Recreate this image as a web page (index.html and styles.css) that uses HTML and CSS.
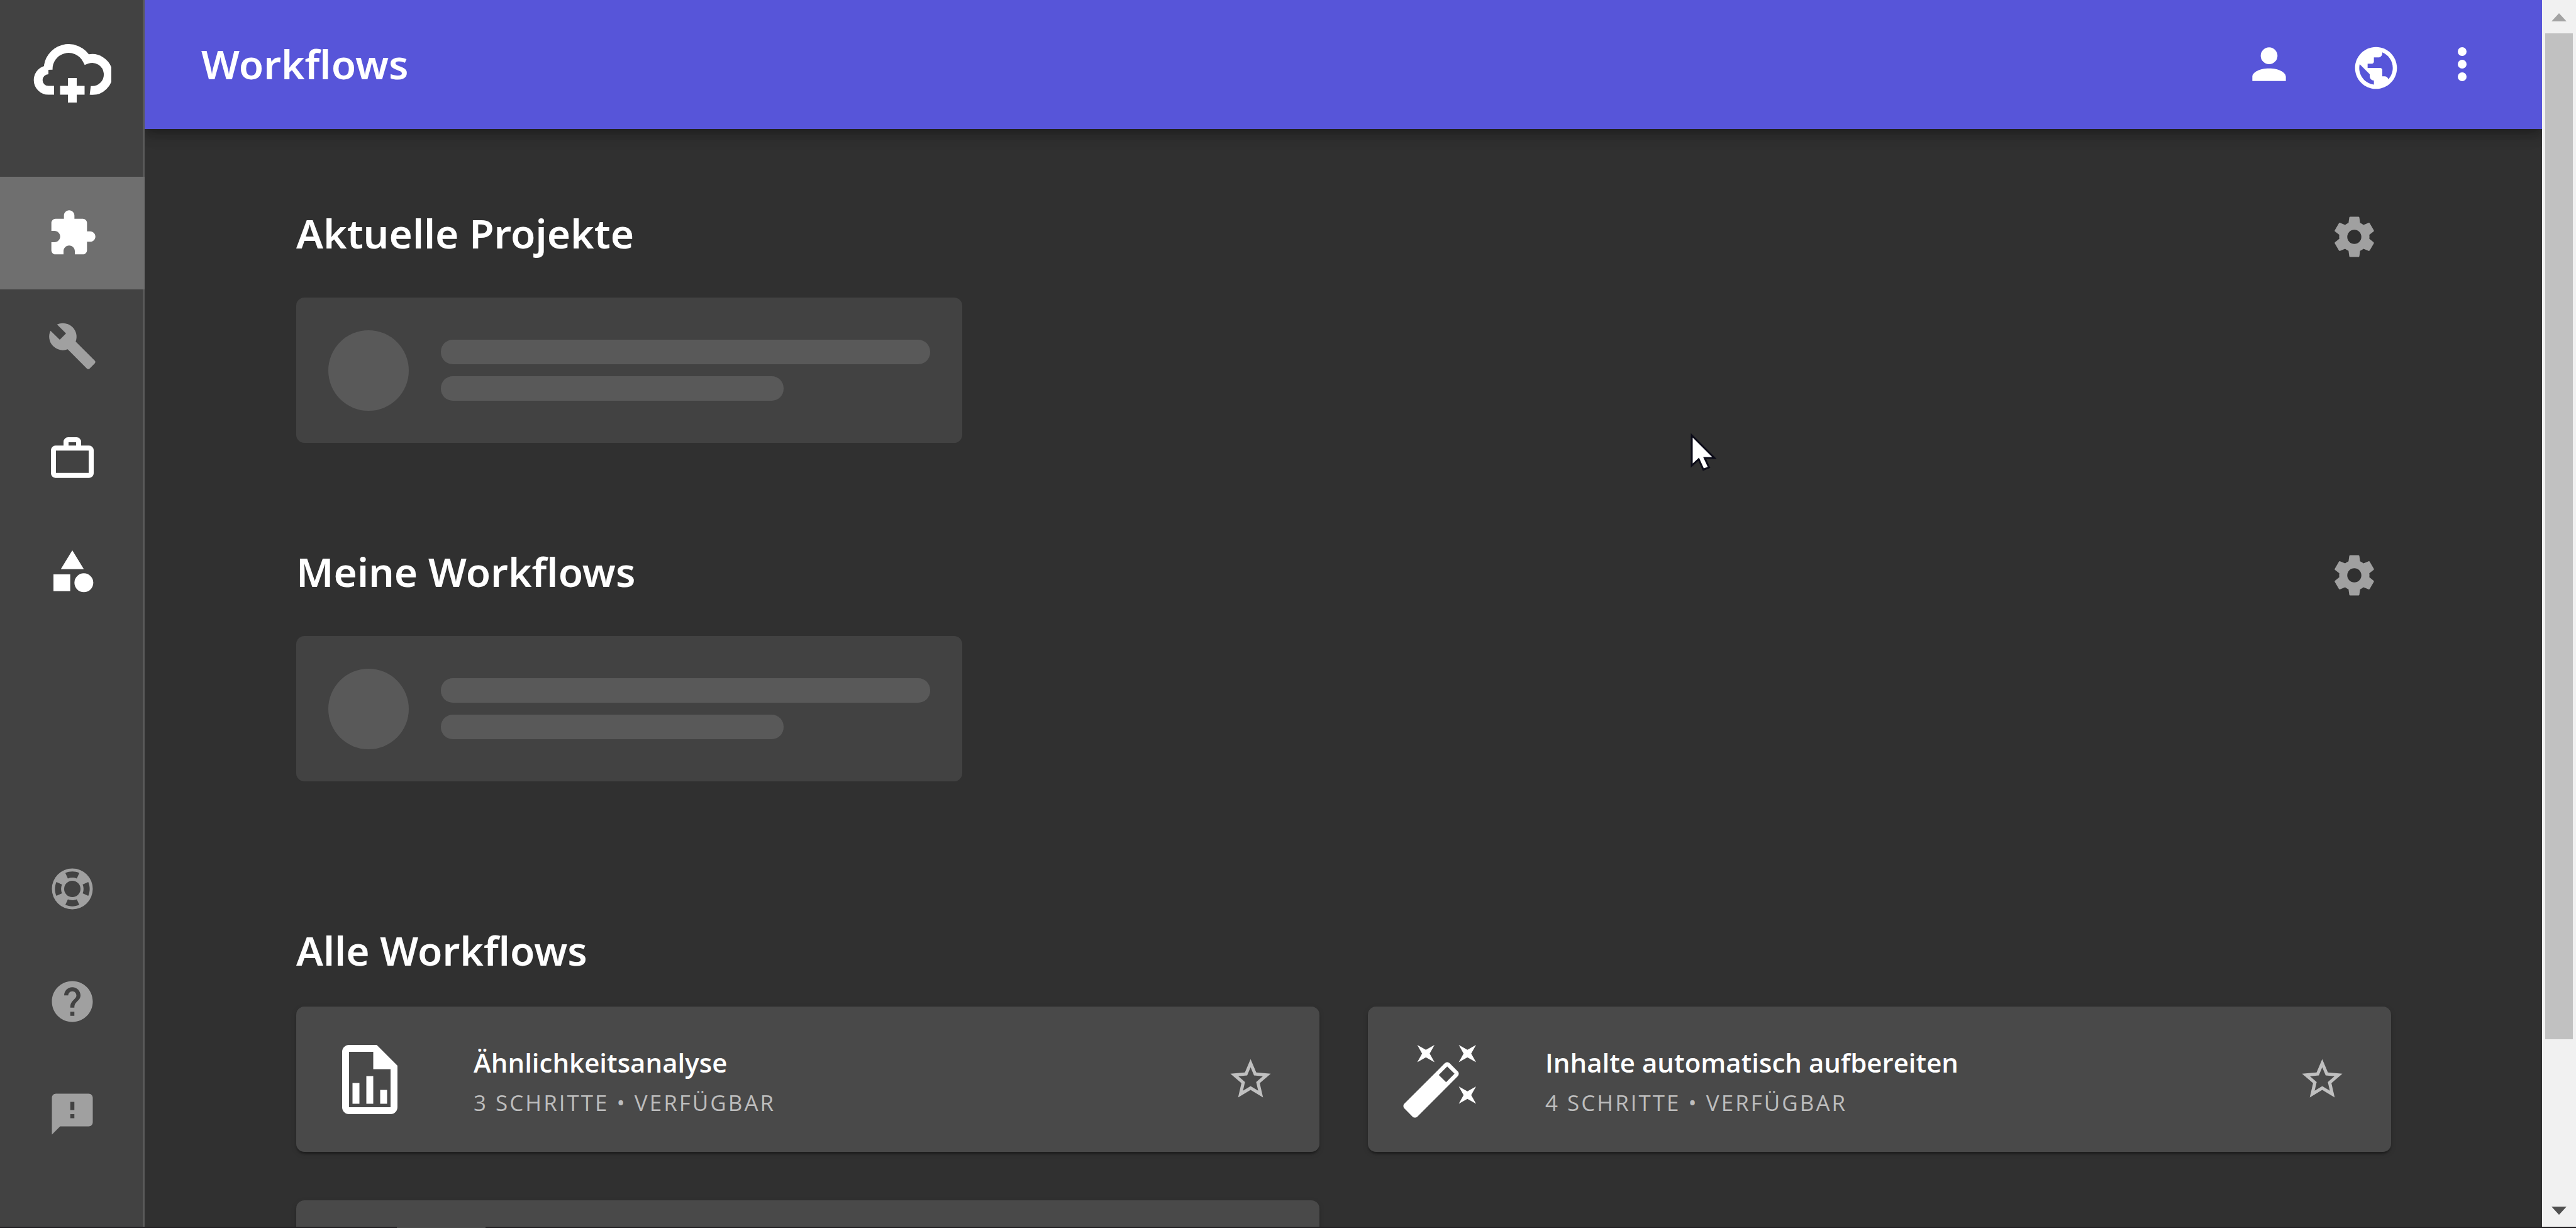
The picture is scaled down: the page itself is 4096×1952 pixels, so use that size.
FILE: index.html
```html
<!DOCTYPE html>
<html lang="de">
<head>
  <meta charset="UTF-8" />
  <title>Workflows</title>
  <link rel="stylesheet" href="styles.css">
</head>
<body>

  <div class="app">
    <aside class="sidebar">
      <a class="logo" href="#" aria-label="Start">
        <svg viewBox="53 69 124 94">
          <path d="M86 142.6H77A16.3 16.3 0 0 1 77 110H76.6A32.6 32.6 0 0 1 138 93.5A25.4 25.4 0 1 1 143.5 142.6" fill="none" stroke="#fff" stroke-width="14"/>
          <path d="M108 123h14v12.5h12.5v14H122V162h-14v-12.5H95.5v-14H108z" fill="#fff"/>
        </svg>
      </a>

      <nav class="nav">
        <a class="nav-item active" href="#" aria-label="Workflows">
          <svg viewBox="0 0 24 24"><path d="M20.5 11H19V7c0-1.1-.9-2-2-2h-4V3.5C13 2.12 11.88 1 10.5 1S8 2.12 8 3.5V5H4c-1.1 0-1.99.9-1.99 2v3.8H3.5c1.49 0 2.7 1.21 2.7 2.7s-1.21 2.7-2.7 2.7H2V20c0 1.1.9 2 2 2h3.8v-1.5c0-1.49 1.21-2.7 2.7-2.7 1.49 0 2.7 1.21 2.7 2.7V22H17c1.1 0 2-.9 2-2v-4h1.5c1.38 0 2.5-1.12 2.5-2.5S21.88 11 20.5 11z"/></svg>
        </a>
        <a class="nav-item muted" href="#" aria-label="Werkzeuge">
          <svg viewBox="0 0 24 24"><path d="M22.7 19l-9.1-9.1c.9-2.3.4-5-1.5-6.9-2-2-5-2.4-7.4-1.3L9 6 6 9 1.6 4.7C.4 7.1.9 10.1 2.9 12.1c1.9 1.9 4.6 2.4 6.9 1.5l9.1 9.1c.4.4 1 .4 1.4 0l2.3-2.3c.5-.4.5-1.1.1-1.4z"/></svg>
        </a>
        <a class="nav-item" href="#" aria-label="Projekte">
          <svg viewBox="0 0 24 24"><path stroke="#fff" stroke-width=".4" d="M14 6V4h-4v2h4zM4 8v11h16V8H4zm16-2c1.11 0 2 .89 2 2v11c0 1.11-.89 2-2 2H4c-1.11 0-2-.89-2-2l.01-11c0-1.11.88-2 1.99-2h4V4c0-1.11.89-2 2-2h4c1.11 0 2 .89 2 2v2h4z"/></svg>
        </a>
        <a class="nav-item" href="#" aria-label="Kategorien">
          <svg viewBox="0 0 24 24"><path d="M12 2l-5.500 9h11z"/><circle cx="17.500" cy="17.500" r="4.500"/><path d="M3 13.500h8v8H3z"/></svg>
        </a>
      </nav>

      <nav class="nav nav-bottom">
        <a class="nav-item muted" href="#" aria-label="Support">
          <svg viewBox="0 0 24 24"><path fill-rule="evenodd" d="M19.79,15.41C20.74,13.24 20.74,10.75 19.79,8.59L17.05,9.83C17.65,11.21 17.65,12.78 17.06,14.17L19.79,15.41M15.42,4.21C13.25,3.26 10.76,3.26 8.59,4.21L9.83,6.94C11.22,6.35 12.79,6.35 14.18,6.95L15.42,4.21M4.21,8.58C3.26,10.76 3.26,13.24 4.21,15.42L6.95,14.17C6.35,12.79 6.35,11.21 6.95,9.82L4.21,8.58M8.59,19.79C10.76,20.74 13.25,20.74 15.42,19.78L14.18,17.05C12.8,17.65 11.22,17.65 9.84,17.06L8.59,19.79M12,2A10,10 0 0,1 22,12A10,10 0 0,1 12,22A10,10 0 0,1 2,12A10,10 0 0,1 12,2M12,8A4,4 0 0,0 8,12A4,4 0 0,0 12,16A4,4 0 0,0 16,12A4,4 0 0,0 12,8Z"/></svg>
        </a>
        <a class="nav-item muted" href="#" aria-label="Hilfe">
          <svg viewBox="0 0 24 24"><path d="M12 2C6.48 2 2 6.48 2 12s4.48 10 10 10 10-4.48 10-10S17.52 2 12 2zm1 17h-2v-2h2v2zm2.07-7.75l-.9.92C13.45 12.9 13 13.5 13 15h-2v-.5c0-1.1.45-2.1 1.17-2.83l1.24-1.26c.37-.36.59-.86.59-1.41 0-1.1-.9-2-2-2s-2 .9-2 2H8c0-2.21 1.79-4 4-4s4 1.79 4 4c0 .88-.36 1.68-.93 2.25z"/></svg>
        </a>
        <a class="nav-item muted" href="#" aria-label="Feedback">
          <svg viewBox="0 0 24 24"><path d="M20 2H4c-1.1 0-1.99.9-1.99 2L2 22l4-4h14c1.1 0 2-.9 2-2V4c0-1.1-.9-2-2-2zm-7 12h-2v-2h2v2zm0-4h-2V6h2v4z"/></svg>
        </a>
      </nav>
    </aside>

    <div class="page">
      <header class="topbar">
        <h1>Workflows</h1>
        <div class="actions">
          <button class="account" aria-label="Konto">
            <svg viewBox="0 0 24 24"><path d="M12,4A4,4 0 0,1 16,8A4,4 0 0,1 12,12A4,4 0 0,1 8,8A4,4 0 0,1 12,4M12,14C16.42,14 20,15.79 20,18V20H4V18C4,15.79 7.58,14 12,14Z"/></svg>
          </button>
          <button class="language" aria-label="Sprache">
            <svg viewBox="0 0 24 24"><path d="M12 2C6.48 2 2 6.48 2 12s4.48 10 10 10 10-4.48 10-10S17.52 2 12 2zm-1 17.93c-3.95-.49-7-3.85-7-7.93 0-.62.08-1.21.21-1.79L9 15v1c0 1.1.9 2 2 2v1.93zm6.9-2.54c-.26-.81-1-1.39-1.9-1.39h-1v-3c0-.55-.45-1-1-1H8v-2h2c.55 0 1-.45 1-1V7h2c1.1 0 2-.9 2-2v-.41c2.93 1.19 5 4.06 5 7.41 0 2.08-.8 3.97-2.1 5.39z"/></svg>
          </button>
          <button aria-label="Mehr">
            <svg viewBox="0 0 24 24"><circle cx="12" cy="6" r="2.1"/><circle cx="12" cy="12" r="2.1"/><circle cx="12" cy="18" r="2.1"/></svg>
          </button>
        </div>
      </header>

      <main class="content">
        <section>
          <div class="section-head">
            <h2>Aktuelle Projekte</h2>
            <button class="settings" aria-label="Einstellungen">
              <svg viewBox="0 0 24 24"><path id="cog" d="M12,15.5A3.5,3.5 0 0,1 8.5,12A3.5,3.5 0 0,1 12,8.5A3.5,3.5 0 0,1 15.5,12A3.5,3.5 0 0,1 12,15.5M19.43,12.97C19.47,12.65 19.5,12.33 19.5,12C19.5,11.67 19.47,11.34 19.43,11L21.54,9.37C21.73,9.22 21.78,8.95 21.66,8.73L19.66,5.27C19.54,5.05 19.27,4.96 19.05,5.05L16.56,6.05C16.04,5.66 15.5,5.32 14.87,5.07L14.5,2.42C14.46,2.18 14.25,2 14,2H10C9.75,2 9.54,2.18 9.5,2.42L9.13,5.07C8.5,5.32 7.96,5.66 7.44,6.05L4.95,5.05C4.73,4.96 4.46,5.05 4.34,5.27L2.34,8.73C2.21,8.95 2.27,9.22 2.46,9.37L4.57,11C4.53,11.34 4.5,11.67 4.5,12C4.5,12.33 4.53,12.65 4.57,12.97L2.46,14.63C2.27,14.78 2.21,15.05 2.34,15.27L4.34,18.73C4.46,18.95 4.73,19.03 4.95,18.95L7.44,17.94C7.96,18.34 8.5,18.68 9.13,18.93L9.5,21.58C9.54,21.82 9.75,22 10,22H14C14.25,22 14.46,21.82 14.5,21.58L14.87,18.93C15.5,18.67 16.04,18.34 16.56,17.94L19.05,18.95C19.27,19.03 19.54,18.95 19.66,18.73L21.66,15.27C21.78,15.05 21.73,14.78 21.54,14.63L19.43,12.97Z"/></svg>
            </button>
          </div>
          <div class="grid-three">
            <div class="skeleton">
              <div class="skeleton-avatar"></div>
              <div class="skeleton-lines">
                <div class="skeleton-line"></div>
                <div class="skeleton-line short"></div>
              </div>
            </div>
          </div>
        </section>

        <section>
          <div class="section-head">
            <h2>Meine Workflows</h2>
            <button class="settings" aria-label="Einstellungen">
              <svg viewBox="0 0 24 24"><use href="#cog"/></svg>
            </button>
          </div>
          <div class="grid-three">
            <div class="skeleton">
              <div class="skeleton-avatar"></div>
              <div class="skeleton-lines">
                <div class="skeleton-line"></div>
                <div class="skeleton-line short"></div>
              </div>
            </div>
          </div>
        </section>

        <section class="all">
          <h2>Alle Workflows</h2>
          <div class="grid-two">
            <article class="card">
              <svg class="card-icon" viewBox="0 0 24 24"><path d="M14 2H6C4.89 2 4 2.9 4 4V20C4 21.11 4.89 22 6 22H18C19.11 22 20 21.11 20 20V8L14 2M18 20H6V4H13V9H18V20M9 13V19H7V13H9M15 15V19H17V15H15M11 11V19H13V11H11Z"/></svg>
              <div class="card-text">
                <h3>Ähnlichkeitsanalyse</h3>
                <p>3 Schritte • verfügbar</p>
              </div>
              <button class="star" aria-label="Favorit">
                <svg viewBox="0 0 24 24"><path id="star" d="M22 9.24l-7.19-.62L12 2 9.19 8.63 2 9.24l5.46 4.73L5.82 21 12 17.27 18.18 21l-1.63-7.03L22 9.24zM12 15.4l-3.76 2.27 1-4.28-3.32-2.88 4.38-.38L12 6.1l1.71 4.04 4.38.38-3.32 2.88 1 4.28L12 15.4z"/></svg>
              </button>
            </article>
            <article class="card">
              <svg class="card-icon" viewBox="0 0 24 24"><path d="M7.5,5.6L5,7L6.4,4.5L5,2L7.5,3.4L10,2L8.6,4.5L10,7L7.5,5.6M19.5,15.4L22,14L20.6,16.5L22,19L19.5,17.6L17,19L18.4,16.5L17,14L19.5,15.4M22,2L20.6,4.5L22,7L19.5,5.6L17,7L18.4,4.5L17,2L19.5,3.4L22,2M13.34,12.78L15.78,10.34L13.66,8.22L11.22,10.66L13.34,12.78M14.37,7.29L16.71,9.63C17.1,10 17.1,10.65 16.71,11.04L5.04,22.71C4.65,23.1 4,23.1 3.63,22.71L1.29,20.37C0.9,20 0.9,19.35 1.29,18.96L12.96,7.29C13.35,6.9 14,6.9 14.37,7.29Z"/></svg>
              <div class="card-text">
                <h3>Inhalte automatisch aufbereiten</h3>
                <p>4 Schritte • verfügbar</p>
              </div>
              <button class="star" aria-label="Favorit">
                <svg viewBox="0 0 24 24"><use href="#star"/></svg>
              </button>
            </article>
            <article class="card"></article>
          </div>
        </section>
      </main>
    </div>

    <div class="scrollbar">
      <svg class="arrow" viewBox="0 0 24 13"><path d="M12 0l12 13H0z" fill="#a3a3a3"/></svg>
      <div class="track">
        <div class="thumb"></div>
      </div>
      <svg class="arrow" viewBox="0 0 24 13"><path d="M0 0h24L12 13z" fill="#505050"/></svg>
    </div>
  </div>

  <div class="strip"><div class="strip-tab"></div></div>

  <svg class="cursor" viewBox="-2 -3 44 64">
    <path d="M1 2V50L12 40L19.500 56.500L28.500 53L21.500 38H37z" fill="#fff" stroke="#0b0b18" stroke-width="3"/>
  </svg>

</body>
</html>
```
FILE: styles.css
```css
* {
  box-sizing: border-box;
}

html, body {
  margin: 0;
  padding: 0;
  height: 100%;
}

body {
  display: flex;
  flex-direction: column;
  position: relative;
  overflow: hidden;
  background: #303030;
  color: #fff;
  font-family: "Open Sans", "Noto Sans", sans-serif;
}

h1, h2, h3, p {
  margin: 0;
}

h1, h2 {
  font-family: "Noto Sans", sans-serif;
  font-size: 64px;
  font-weight: 600;
  line-height: 90px;
}

button {
  display: flex;
  align-items: center;
  justify-content: center;
  padding: 0;
  border: none;
  background: none;
  color: inherit;
  cursor: pointer;
}

svg {
  display: block;
  fill: currentColor;
}

.app {
  display: flex;
  flex: 1;
  min-height: 0;
}

/* Sidebar */
.sidebar {
  display: flex;
  flex-direction: column;
  flex-shrink: 0;
  width: 230px;
  padding-bottom: 90px;
  background: #424242;
  box-shadow: inset -3px 0 #595959;
}

.logo {
  display: flex;
  justify-content: center;
  height: 281px;
  padding-top: 70px;
}

.logo svg {
  width: 124px;
  height: 94px;
}

.nav-item {
  display: flex;
  align-items: center;
  justify-content: center;
  height: 179px;
  color: #fff;
}

.nav-item svg {
  width: 80px;
  height: 80px;
}

.nav-item.active {
  background: #6f6f6f;
}

.nav-item.muted {
  color: #a0a0a0;
}

.nav-bottom {
  margin-top: auto;
}

.nav-bottom .nav-item svg {
  width: 78px;
  height: 78px;
}

/* Top bar */
.page {
  display: flex;
  flex-direction: column;
  flex: 1;
  min-width: 0;
  overflow: hidden;
}

.topbar {
  display: flex;
  align-items: center;
  justify-content: space-between;
  flex-shrink: 0;
  height: 205px;
  padding: 0 87px 2px 90px;
  background: #5755d9;
  box-shadow: 0 6px 13px -3px rgba(0,0,0,0.2), 0 13px 16px rgba(0,0,0,0.14), 0 3px 32px rgba(0,0,0,0.12);
}

.actions {
  display: flex;
  align-items: center;
  gap: 57px;
}

.actions svg {
  width: 80px;
  height: 80px;
}

.account {
  margin-right: 33px;
}

.language {
  padding-top: 12px;
}

/* Content */
.content {
  display: flex;
  flex-direction: column;
  gap: 152px;
  padding: 113px 240px 0 241px;
}

.section-head {
  display: flex;
  align-items: center;
  justify-content: space-between;
  height: 117px;
  margin-bottom: 38px;
}

.section-head h2 {
  padding-bottom: 12px;
}

.settings {
  width: 117px;
  height: 117px;
  color: #a0a0a0;
}

.settings svg {
  width: 77px;
  height: 77px;
}

.grid-three {
  display: grid;
  grid-template-columns: repeat(3, 1fr);
  gap: 77px;
}

.grid-two {
  display: grid;
  grid-template-columns: repeat(2, 1fr);
  gap: 77px;
}

.skeleton {
  display: flex;
  align-items: center;
  gap: 51px;
  height: 231px;
  padding: 0 51px;
  background: #424242;
  border-radius: 13px;
}

.skeleton-avatar {
  flex-shrink: 0;
  width: 128px;
  height: 128px;
  border-radius: 50%;
  background: #595959;
}

.skeleton-lines {
  flex: 1;
  display: flex;
  flex-direction: column;
  gap: 19px;
}

.skeleton-line {
  height: 39px;
  border-radius: 19px;
  background: #595959;
}

.skeleton-line.short {
  width: 70%;
}

.all {
  padding-top: 72px;
}

.all h2 {
  margin-bottom: 44px;
}

.card {
  display: flex;
  align-items: center;
  height: 231px;
  padding: 0 33px 0 51px;
  background: #494949;
  border-radius: 13px;
  box-shadow: 0 6px 3px -3px rgba(0,0,0,0.2), 0 3px 3px rgba(0,0,0,0.14), 0 3px 10px rgba(0,0,0,0.12);
}

.card-icon {
  flex-shrink: 0;
  width: 132px;
  height: 132px;
  margin-right: 99px;
}

.card-text {
  flex: 1;
  padding-top: 10px;
}

.card-text h3 {
  font-size: 42px;
  font-weight: 600;
  line-height: 64px;
}

.card-text p {
  color: #bdbdbd;
  font-size: 35px;
  line-height: 64px;
  letter-spacing: 3px;
  text-transform: uppercase;
}

.star {
  width: 154px;
  height: 154px;
  color: #c0c0c0;
}

.star svg {
  width: 77px;
  height: 77px;
}

/* Scrollbar */
.scrollbar {
  display: flex;
  flex-direction: column;
  align-items: center;
  flex-shrink: 0;
  width: 54px;
  padding: 21px 0 19px;
  background: #f1f1f1;
}

.arrow {
  width: 24px;
  height: 13px;
}

.track {
  display: flex;
  flex-direction: column;
  flex: 1;
  width: 44px;
  padding: 19px 0 20px;
}

.track::after {
  content: "";
  flex: 2;
}

.thumb {
  flex: 13;
  background: #c1c1c1;
}

.strip {
  flex-shrink: 0;
  height: 2px;
  padding-left: 631px;
  background: #211f22;
}

.strip-tab {
  width: 141px;
  height: 2px;
  background: #4a4a4a;
}

.cursor {
  position: absolute;
  left: 65.6%;
  top: 35.2%;
  width: 44px;
  height: 64px;
}
```
